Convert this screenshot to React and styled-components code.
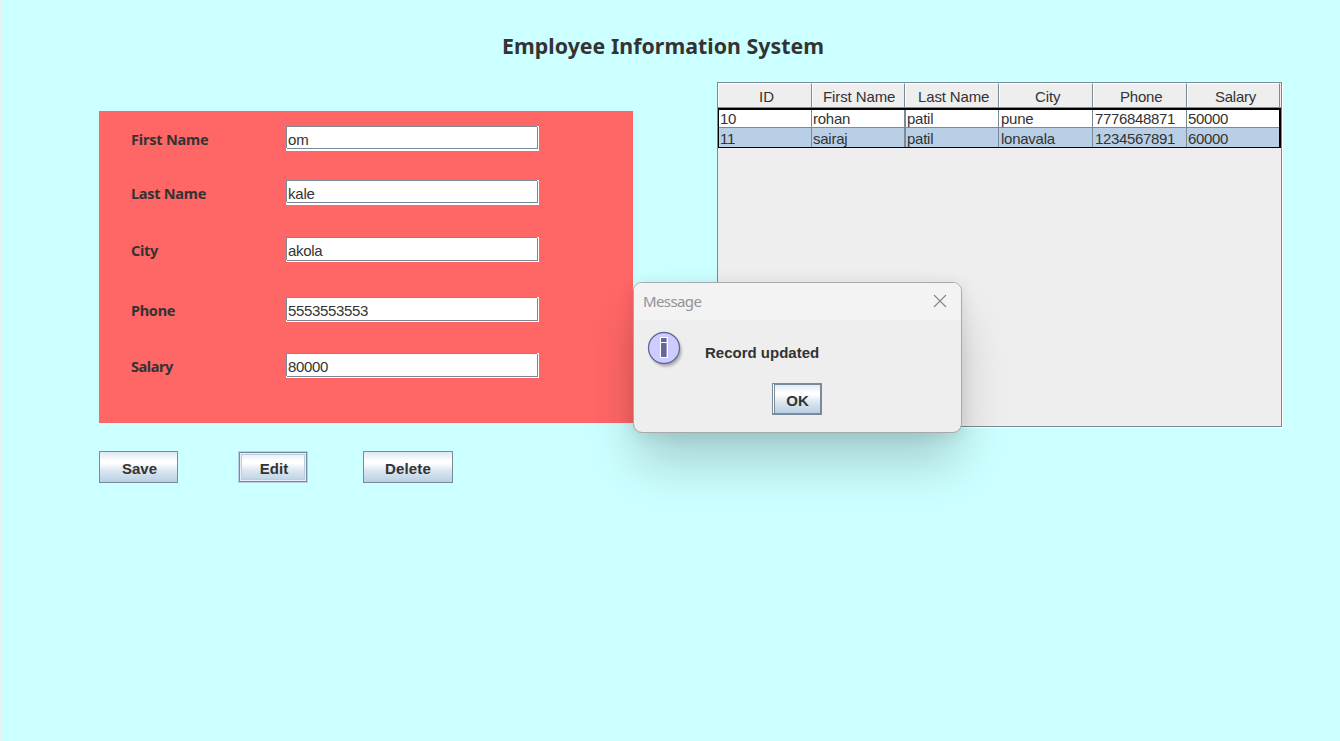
import React from "react";
import styled, { createGlobalStyle } from "styled-components";

const Global = createGlobalStyle`
  * { box-sizing: border-box; }
  body { margin: 0; background: #ccffff; color: #333333; overflow: hidden; }
`;

const sans = `"Liberation Sans", Arial, sans-serif`;
const humanist = `"Noto Sans", "Open Sans", sans-serif`;

const Frame = styled.main`
  height: 741px;
  width: 1340px;
  border-left: 1px solid #eeeeee;
  background: #ccffff;
  font: 15px/20px ${sans};
`;

const Title = styled.h1`
  margin: 0;
  padding: 30px 0 0 501px;
  height: 82px;
  font: 700 21.3px/32px ${humanist};
  letter-spacing: 0.05px;
  white-space: nowrap;
`;

const Body = styled.div`
  display: flex;
  align-items: flex-start;
  padding-left: 98px;
`;

const Left = styled.section`
  width: 534px;
  margin-right: 84px;
  padding-top: 29px;
`;

const FormPanel = styled.div`
  height: 312px;
  padding: 15px 0 0 32px;
  background: #ff6666;
`;

const FieldRow = styled.div`
  display: flex;
  height: 25px;
  margin-bottom: ${(p) => p.$gap}px;
`;

const Label = styled.label`
  width: 155px;
  font: 700 14.5px/20px ${humanist};
  padding-top: 3px;
  letter-spacing: ${(p) => p.$ls}px;
  white-space: nowrap;
`;

const FieldShell = styled.div`
  width: 253px;
  height: 25px;
  padding: 0 1px 0 0;
  background: #ffffff;
`;

const FieldValue = styled.div`
  position: relative;
  height: ${(p) => p.$h}px;
  padding: 4px 0 0 1px;
  line-height: 18px;
  border: 1px solid #7a8a99;
  letter-spacing: ${(p) => p.$ls}px;

  &::before,
  &::after {
    content: "";
    position: absolute;
    width: 1px;
    height: 1px;
    background: #ffffff;
  }
  &::before { left: -1px; bottom: -1px; }
  &::after { right: -1px; top: -1px; }
`;

const Actions = styled.div`
  display: flex;
  margin-top: 28px;
`;

const Button = styled.button`
  width: ${(p) => p.$w}px;
  height: 32px;
  margin-right: ${(p) => p.$gap || 0}px;
  padding: 3px 0 0 ${(p) => p.$shift || 0}px;
  border: 1px solid #7a8a99;
  border-radius: 0;
  background: linear-gradient(#dde8f3 0%, #ffffff 30%, #ffffff 36%, #dce6f0 62%, #b8cfe5 100%);
  color: #333333;
  font: 700 15px/20px ${sans};
  letter-spacing: ${(p) => p.$ls || 0}px;
`;

const FocusButton = styled(Button)`
  border-color: #b8cfe5;
  box-shadow: inset 0 0 0 1px #7a8a99, inset 0 0 0 2px #e7eef6, inset 0 0 0 3px #b8cfe5;
`;

const DefaultButton = styled(Button)`
  padding-top: 5px;
  border-width: 1px 2px 2px 1px;
  box-shadow: inset 1px 0 0 #ffffff, inset 2px 0 0 #7a8a99, inset 0 1px 0 #7a8a99;
`;

const ScrollPane = styled.section`
  width: 566px;
  height: 346px;
  border-right: 1px solid #ffffff;
  border-bottom: 1px solid #ffffff;
  background: #eeeeee;
`;

const Viewport = styled.div`
  height: 345px;
  border: 1px solid #7a8a99;
`;

const HeaderRow = styled.div`
  display: flex;
  width: 563px;
  height: 25px;
  border-bottom: 1px solid #7a8a99;
`;

const columns = [94, 93, 94, 94, 94, 93];

const HeaderCell = styled.div`
  width: ${(p) => p.$w}px;
  border-right: 1px solid #7a8a99;
  border-left: 1px solid #ffffff;
  border-top: 1px solid #ffffff;
  padding: 3px 0 0 ${(p) => p.$pad}px;
  letter-spacing: ${(p) => p.$ls}px;
  line-height: 20px;
  white-space: nowrap;
`;

const Rows = styled.div`
  width: 563px;
  height: 40px;
  border: solid #000000;
  border-width: 2px 2px 1px 1px;
`;

const Row = styled.div`
  display: flex;
  height: ${(p) => (p.$selected ? 19 : 18)}px;
  background: ${(p) => (p.$selected ? "#b8cfe5" : "#ffffff")};
  border-bottom: ${(p) => (p.$selected ? "0" : "1px solid #7a8a99")};
`;

const Cell = styled.div`
  flex: none;
  width: ${(p) => p.$w}px;
  padding-left: ${(p) => p.$pad}px;
  border-right: ${(p) => p.$line}px solid #7a8a99;
  line-height: ${(p) => (p.$selected ? 22 : 18)}px;
  letter-spacing: ${(p) => p.$ls}px;
  white-space: nowrap;
`;

const Dialog = styled.div`
  position: absolute;
  left: 633px;
  top: 282px;
  width: 329px;
  height: 151px;
  border: 1px solid #a5abab;
  border-radius: 9px;
  overflow: hidden;
  background: #eeeeee;
  background-clip: padding-box;
  box-shadow: 0 32px 50px -4px rgba(0, 0, 0, 0.2), 0 2px 16px rgba(0, 0, 0, 0.09);
`;

const DialogBar = styled.header`
  display: flex;
  justify-content: space-between;
  height: 37px;
  padding: 7px 14px 0 9px;
  background: #f3f3f3;
  color: #929292;
  font: 15px/22px ${humanist};
  letter-spacing: -0.6px;
`;

const DialogBody = styled.div`
  display: flex;
  height: 63px;
  padding: 11px 0 0 13px;
`;

const DialogText = styled.div`
  padding: 12px 0 0 18px;
  font: 700 15px/20px ${sans};
`;

const DialogActions = styled.footer`
  display: flex;
  padding-left: 138px;
`;

const CloseSvg = styled.svg`
  margin-top: 4px;
`;

const CloseIcon = () => (
  <CloseSvg width="14" height="14" viewBox="0 0 14 14">
    <path d="M1 1L13 13M13 1L1 13" stroke="#858585" strokeWidth="1.1" fill="none" />
  </CloseSvg>
);

const InfoIcon = () => (
  <svg width="40" height="40" viewBox="0 0 40 40">
    <defs>
      <filter id="soft" x="-20%" y="-20%" width="150%" height="150%">
        <feGaussianBlur stdDeviation="1.8" />
      </filter>
    </defs>
    <circle cx="19" cy="20" r="15.5" fill="#000" opacity=".28" filter="url(#soft)" />
    <circle cx="17" cy="17" r="15.5" fill="#ccccff" stroke="#666699" strokeWidth="1.3" />
    <path d="M13 6h8v21h-8z" fill="#ffffff" />
    <path d="M14 7h5v4h-5zM14 12h5v14h-5z" fill="#666699" />
    <path d="M19 7h1v4h-1zM19 12h1v14h-1z" fill="#9f9fcc" />
  </svg>
);

const fields = [
  { label: "First Name", value: "om", gap: 29, h: 23, ls: -0.2, vls: 0 },
  { label: "Last Name", value: "kale", gap: 32, h: 23, ls: -0.26, vls: -0.2 },
  { label: "City", value: "akola", gap: 35, h: 24, ls: -0.3, vls: -0.3 },
  { label: "Phone", value: "5553553553", gap: 31, h: 24, ls: -0.28, vls: -0.34 },
  { label: "Salary", value: "80000", gap: 0, h: 24, ls: -0.45, vls: -0.34 },
];

const headers = [
  { text: "ID", pad: 40, ls: 0 },
  { text: "First Name", pad: 10, ls: -0.1 },
  { text: "Last Name", pad: 12, ls: -0.15 },
  { text: "City", pad: 35, ls: -0.1 },
  { text: "Phone", pad: 26, ls: -0.2 },
  { text: "Salary", pad: 27, ls: -0.25 },
];

const cellWidths = [93, 94, 93, 94, 94, 92];
const cellPads = [1, 1, 1, 2, 2, 1];
const records = [
  ["10", "rohan", "patil", "pune", "7776848871", "50000"],
  ["11", "sairaj", "patil", "lonavala", "1234567891", "60000"],
];

export default function App() {
  return (
    <>
      <Global />
      <Frame>
        <Title>Employee Information System</Title>
        <Body>
          <Left>
            <FormPanel>
              {fields.map((f) => (
                <FieldRow key={f.label} $gap={f.gap}>
                  <Label $ls={f.ls}>{f.label}</Label>
                  <FieldShell>
                    <FieldValue $h={f.h} $ls={f.vls}>{f.value}</FieldValue>
                  </FieldShell>
                </FieldRow>
              ))}
            </FormPanel>
            <Actions>
              <Button $w={79} $gap={60} $shift={2}>Save</Button>
              <FocusButton $w={70} $gap={55} $shift={2}>Edit</FocusButton>
              <Button $w={90} $ls={0.15}>Delete</Button>
            </Actions>
          </Left>
          <ScrollPane>
            <Viewport>
              <HeaderRow>
                {headers.map((h, i) => (
                  <HeaderCell key={h.text} $w={columns[i]} $pad={h.pad} $ls={h.ls}>{h.text}</HeaderCell>
                ))}
              </HeaderRow>
              <Rows>
                {records.map((r, n) => (
                  <Row key={r[0]} $selected={n === 1}>
                    {r.map((v, i) => (
                      <Cell
                        key={i}
                        $w={cellWidths[i]}
                        $pad={cellPads[i]}
                        $line={i === 5 ? 0 : i === 1 ? 2 : 1}
                        $selected={n === 1}
                        $ls={/^\d/.test(v) ? -0.34 : -0.25}
                      >
                        {v}
                      </Cell>
                    ))}
                  </Row>
                ))}
              </Rows>
            </Viewport>
          </ScrollPane>
        </Body>
        <Dialog role="dialog">
          <DialogBar>
            <span>Message</span>
            <CloseIcon />
          </DialogBar>
          <DialogBody>
            <InfoIcon />
            <DialogText>Record updated</DialogText>
          </DialogBody>
          <DialogActions>
            <DefaultButton $w={50} $shift={2}>OK</DefaultButton>
          </DialogActions>
        </Dialog>
      </Frame>
    </>
  );
}
